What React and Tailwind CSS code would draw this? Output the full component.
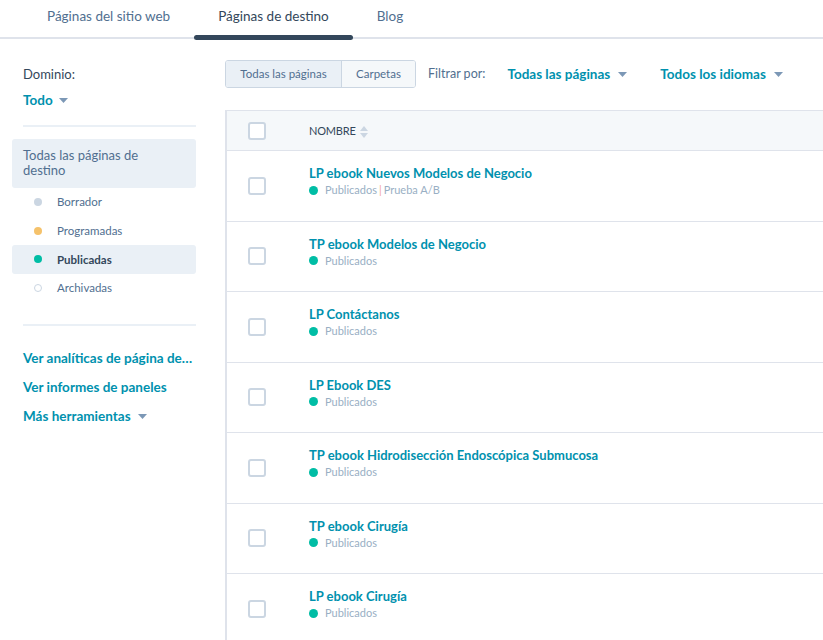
import React from "react";

const Caret = ({ className = "" }) => (
  <svg width="9" height="5" viewBox="0 0 9 5" className={className}>
    <path d="M0 0 L9 0 L4.5 5 Z" fill="#7c98b6" />
  </svg>
);

const Checkbox = () => (
  <div className="w-[18px] h-[18px] rounded-[3px] border-2 border-[#cbd6e2] bg-white" />
);

const rows = [
  { t: "LP ebook Nuevos Modelos de Negocio", ab: true },
  { t: "TP ebook Modelos de Negocio" },
  { t: "LP Contáctanos" },
  { t: "LP Ebook DES" },
  { t: "TP ebook Hidrodisección Endoscópica Submucosa" },
  { t: "TP ebook Cirugía" },
  { t: "LP ebook Cirugía" },
];

export default function App() {
  return (
    <div
      className="w-[823px] h-[640px] overflow-hidden bg-white text-[#33475b]"
      style={{ fontFamily: "Lato, 'Noto Sans', sans-serif" }}
    >
      {/* Tabs */}
      <div className="relative h-[39px] border-b-2 border-[#dfe3eb] flex pl-[23px]">
        {["Páginas del sitio web", "Páginas de destino", "Blog"].map((t, i) => (
          <div
            key={t}
            className={`relative px-[24px] h-full flex items-start pt-[6px] text-[13.5px] ${
              i === 1 ? "text-[#33475b]" : "text-[#516f90]"
            }`}
          >
            {t}
            {i === 1 && (
              <div className="absolute left-0 right-0 bottom-[-3px] h-[5px] rounded-full bg-[#33475b]" />
            )}
          </div>
        ))}
      </div>

      <div className="flex">
        {/* Sidebar */}
        <div className="w-[225px] shrink-0 pl-3 pr-[29px]">
          <div className="pl-[11px] mt-[26px] text-[13px] leading-[18px]">Dominio:</div>
          <div className="pl-[11px] mt-[8px] flex items-center gap-[6px] text-[13.5px] leading-[18px] font-bold text-[#0091ae]">
            Todo <Caret />
          </div>
          <div className="ml-[11px] mt-[16px] h-[1.5px] bg-[#eaf0f6]" />
          <div className="mt-[12px] rounded-[3px] bg-[#eaf0f6] px-[11px] pt-[9px] pb-[9px] text-[13px] leading-[15.5px] text-[#516f90]">
            <div className="w-[140px]">Todas las páginas de destino</div>
          </div>
          <div className="mt-0">
            {[
              { l: "Borrador", c: "bg-[#cbd6e2]" },
              { l: "Programadas", c: "bg-[#f5c26b]" },
              { l: "Publicadas", c: "bg-[#00bda5]", sel: true },
              { l: "Archivadas", c: "bg-white border border-[#cbd6e2]" },
            ].map((it) => (
              <div
                key={it.l}
                className={`h-[28.7px] flex items-center rounded-[3px] pl-[22px] text-[11.5px] ${
                  it.sel ? "bg-[#eaf0f6] text-[#33475b] font-bold" : "text-[#516f90]"
                }`}
              >
                <span className={`w-[8px] h-[8px] rounded-full ${it.c}`} />
                <span className="ml-[15px]">{it.l}</span>
              </div>
            ))}
          </div>
          <div className="ml-[11px] mt-[22px] h-[1.5px] bg-[#eaf0f6]" />
          <div className="pl-[11px] mt-[18px] flex flex-col text-[13.5px] font-bold text-[#0091ae]">
            <div className="h-[29px] leading-[29px] whitespace-nowrap">Ver analíticas de página de…</div>
            <div className="h-[29px] leading-[29px]">Ver informes de paneles</div>
            <div className="h-[29px] flex items-center gap-[7px]">
              Más herramientas <Caret />
            </div>
          </div>
        </div>

        {/* Main */}
        <div className="flex-1 min-w-0">
          <div className="mt-[21px] flex items-center h-[28px]">
            <div className="flex h-[28px] rounded-[3px] border border-[#cbd6e2] overflow-hidden text-[11.5px] text-[#516f90]">
              <div className="w-[116px] flex items-center justify-center bg-[#eaf0f6] border-r border-[#cbd6e2]">
                Todas las páginas
              </div>
              <div className="w-[73px] flex items-center justify-center bg-[#f5f8fa]">Carpetas</div>
            </div>
            <div className="ml-[12px] text-[12.5px] text-[#516f90]">Filtrar por:</div>
            <div className="ml-[22px] flex items-center gap-[8px] text-[13.5px] font-bold text-[#0091ae]">
              Todas las páginas <Caret />
            </div>
            <div className="ml-[33px] flex items-center gap-[8px] text-[13.5px] font-bold text-[#0091ae]">
              Todos los idiomas <Caret />
            </div>
          </div>

          <div className="mt-[22px] w-[640px] border-l-2 border-t border-[#dfe3eb]">
            <div className="h-[40px] bg-[#f5f8fa] border-b border-[#dfe3eb] flex items-center">
              <div className="ml-[21px]">
                <Checkbox />
              </div>
              <div className="ml-[43px] mt-[2px] flex items-center gap-[4px] text-[11px] tracking-[-0.2px] text-[#33475b]">
                NOMBRE
                <svg width="8" height="12" viewBox="0 0 8 12">
                  <path d="M4 0 L8 5 L0 5 Z" fill="#cbd6e2" />
                  <path d="M0 7 L8 7 L4 12 Z" fill="#cbd6e2" />
                </svg>
              </div>
            </div>
            {rows.map((r) => (
              <div key={r.t} className="h-[70.5px] border-b border-[#dfe3eb] flex">
                <div className="ml-[21px] flex items-center">
                  <Checkbox />
                </div>
                <div className="ml-[43px] pt-[13px]">
                  <div className="text-[13px] leading-[18px] font-bold text-[#0091ae]">{r.t}</div>
                  <div className="flex items-center text-[11px] leading-[16px] text-[#99afc4]">
                    <span className="w-[9px] h-[9px] rounded-full bg-[#00bda5] mr-[7px]" />
                    Publicados
                    {r.ab && (
                      <>
                        <span className="mx-[2px] text-[#f2a5a0]">|</span>Prueba A/B
                      </>
                    )}
                  </div>
                </div>
              </div>
            ))}
          </div>
        </div>
      </div>
    </div>
  );
}
